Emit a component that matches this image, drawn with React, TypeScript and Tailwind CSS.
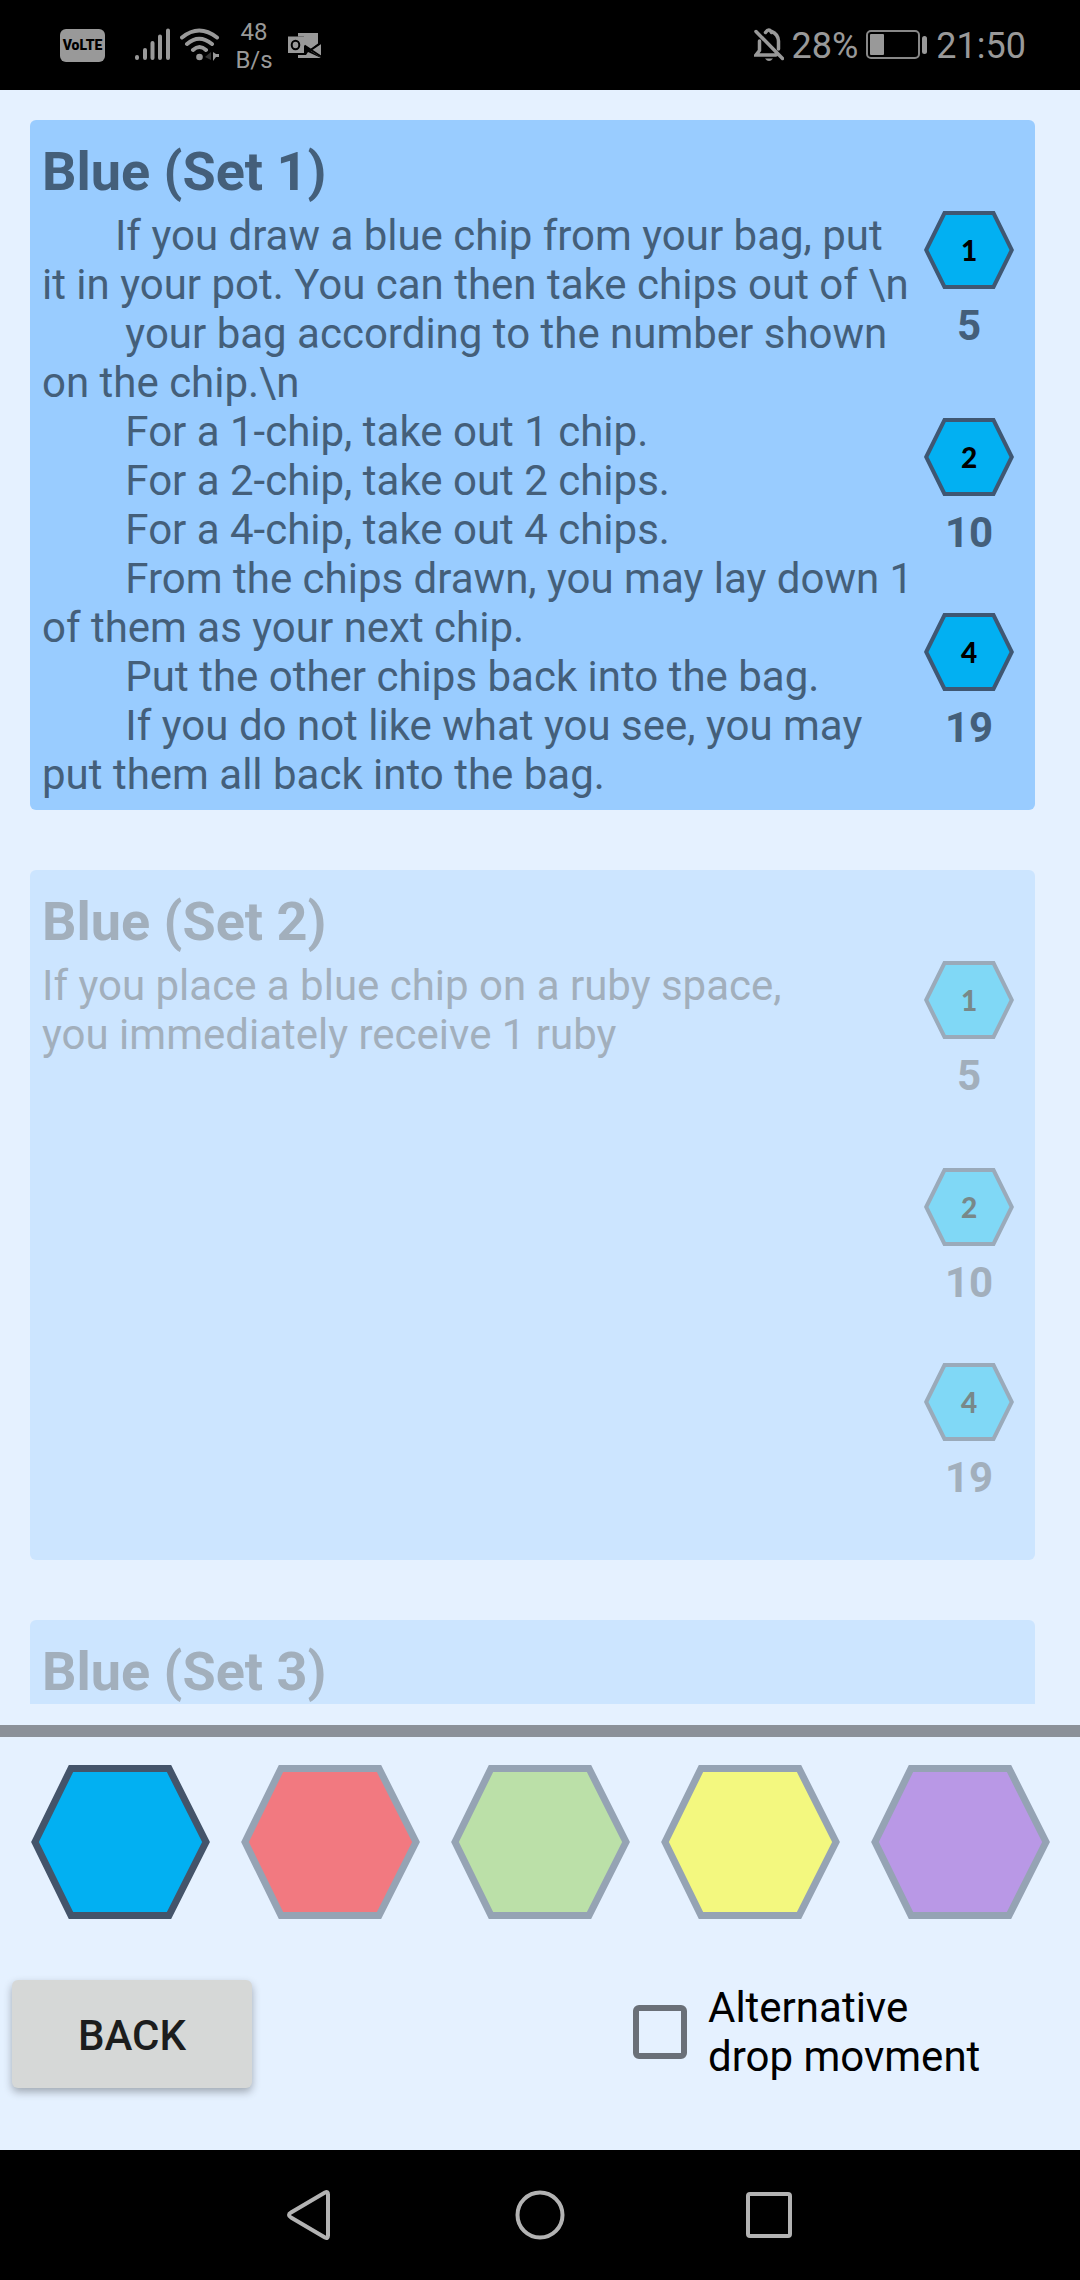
import { useState } from "react";

const CHIPS = [
  { value: 1, price: 5, spacing: "" },
  { value: 2, price: 10, spacing: "mt-[68px]" },
  { value: 4, price: 19, spacing: "mt-14" },
];

const SETS = [
  {
    title: "Blue (Set 1)",
    text:
      "       If you draw a blue chip from your bag, put\n" +
      "it in your pot. You can then take chips out of \\n\n" +
      "        your bag according to the number shown\n" +
      "on the chip.\\n\n" +
      "        For a 1-chip, take out 1 chip.\n" +
      "        For a 2-chip, take out 2 chips.\n" +
      "        For a 4-chip, take out 4 chips.\n" +
      "        From the chips drawn, you may lay down 1\n" +
      "of them as your next chip.\n" +
      "        Put the other chips back into the bag.\n" +
      "        If you do not like what you see, you may\n" +
      "put them all back into the bag.",
    chips: CHIPS,
  },
  {
    title: "Blue (Set 2)",
    text: "If you place a blue chip on a ruby space,\nyou immediately receive 1 ruby",
    chips: CHIPS,
  },
  { title: "Blue (Set 3)", text: "", chips: [] },
];

const COLOURS = [
  { name: "Blue", fill: "#02b0f2", edge: "#44546a" },
  { name: "Red", fill: "#f27980", edge: "#95a3b4" },
  { name: "Green", fill: "#bbe0a8", edge: "#95a3b4" },
  { name: "Yellow", fill: "#f3f87f", edge: "#95a3b4" },
  { name: "Purple", fill: "#b998e6", edge: "#95a3b4" },
];

function StatusBar() {
  return (
    <header className="flex h-[90px] shrink-0 items-center bg-black pr-[54px] pl-[60px] text-[#999]">
      <span className="flex h-[33px] w-[45px] items-center justify-center rounded-md bg-[#999] text-sm font-black text-black">
        VoLTE
      </span>
      <svg className="ml-[30px] h-[34px] w-[35px]" viewBox="0 0 35 34" stroke="currentColor" strokeWidth="4" strokeLinecap="round" aria-label="Signal">
        <path d="M2 29v1M10 22v8M17.500 15v15M25 8.500v21.500M33 2.500v27.500" />
      </svg>
      <svg className="ml-2.5 h-[34px] w-10" viewBox="0 0 40 34" fill="none" stroke="currentColor" strokeWidth="4" strokeLinecap="round" aria-label="Wi-Fi">
        <path d="M2 9.500Q19 -4.500 37 9.500M7 16Q19 5.500 32 16M13 22Q19.500 16 26 22" />
        <circle cx="19.500" cy="29" r="3.300" fill="currentColor" stroke="none" />
        <path d="M31 24v8l-6-3z" fill="#333" stroke="none" />
        <path d="M33 24v9l3-4h3v-3h-3z" fill="currentColor" stroke="none" />
      </svg>
      <span className="ml-3 w-[44px] pt-0.5 text-center text-2xl leading-7">
        48
        <br />
        B/s
      </span>
      <svg className="ml-3 h-[27px] w-[34px]" viewBox="0 0 34 27" aria-label="Outlook">
        <path fill="currentColor" d="M10 1h20v10.500l-8 6-6-4V4.500h-6z" />
        <path fill="currentColor" d="M33 11.500v14l-11-7zM10 23h8l2-3 12 5.500v.500H10z" />
        <rect y="4.500" width="16" height="16.500" fill="currentColor" />
        <ellipse cx="7.500" cy="13" rx="3.800" ry="4.200" fill="none" stroke="#000" strokeWidth="2" />
        <path d="M16.500 13.500L33 24.500M22 18.500L33 11" stroke="#000" strokeWidth="2" />
      </svg>
      <svg className="ml-auto h-[34px] w-[30px]" viewBox="0 0 30 34" fill="none" stroke="currentColor" strokeWidth="3.500" strokeLinecap="round" aria-label="Muted">
        <path d="M2 3.500l26.500 27M5.500 13v9.500L2 27h20M24.500 21v-8q-.500-7-7-9.500M11.500 4.500q3.500-5 6 0" />
        <path d="M11 30.500h8q-4 5-8 0z" fill="currentColor" stroke="none" />
      </svg>
      <span className="ml-2 pt-0.5 text-4xl">28%</span>
      <svg className="ml-2 h-[30px] w-[62px]" viewBox="0 0 62 30" fill="none" aria-label="Battery">
        <rect x="1" y="1" width="52" height="27" rx="4" stroke="#888" strokeWidth="2" />
        <rect x="4" y="4" width="14" height="21" rx="1" fill="currentColor" />
        <rect x="56" y="6" width="5" height="18" rx="2.500" fill="currentColor" />
      </svg>
      <span className="ml-2 pt-0.5 text-4xl">21:50</span>
    </header>
  );
}

function Chip({ value, active }: { value: number; active: boolean }) {
  return (
    <span className="grid place-items-center">
      <svg className="col-start-1 row-start-1 h-[78px] w-[90px]" viewBox="0 0 90 78" aria-hidden="true">
        <path
          d="M2.200 39L20.500 2H69.500L87.800 39L69.500 76H20.500Z"
          fill={active ? "#02b0f2" : "#80d8f6"}
          stroke={active ? "#3f5773" : "#9aaaba"}
          strokeWidth="4"
        />
      </svg>
      <span
        className={`col-start-1 row-start-1 font-['Lato',sans-serif] text-[28px] font-black ${active ? "text-black" : "text-[#788889]"}`}
      >
        {value}
      </span>
    </span>
  );
}

type RuleCardProps = {
  title: string;
  text: string;
  chips: typeof CHIPS;
  active: boolean;
  onSelect: () => void;
};

function RuleCard({ title, text, chips, active, onSelect }: RuleCardProps) {
  return (
    <section
      onClick={onSelect}
      className={`flex min-h-[690px] shrink-0 rounded-md px-3 ${active ? "bg-[#99ccff] text-[#445f7a]" : "bg-[#cce5ff] text-[#a2afbc]"}`}
    >
      <div className="min-w-0 flex-1 pt-5 pb-[11px]">
        <h2 className="text-[54px] leading-[63px] font-bold">{title}</h2>
        <p className="mt-2 text-[42px] leading-[49px] whitespace-pre-wrap">{text}</p>
      </div>
      <ul className="w-[108px] pt-[91px]">
        {chips.map((chip) => (
          <li key={chip.value} className={`flex flex-col items-center gap-3 ${chip.spacing}`}>
            <Chip value={chip.value} active={active} />
            <span className="text-[42px] leading-[49px] font-bold">{chip.price}</span>
          </li>
        ))}
      </ul>
    </section>
  );
}

export default function App() {
  const [selected, setSelected] = useState(0);
  const [alternative, setAlternative] = useState(false);

  return (
    <div className="flex h-screen flex-col bg-[#e5f1ff] font-['Roboto',sans-serif]">
      <StatusBar />

      <main className="mb-[21px] flex min-h-0 flex-1 flex-col gap-[60px] overflow-y-auto pt-[30px] pr-[45px] pl-[30px] [scrollbar-width:none]">
        {SETS.map((set, index) => (
          <RuleCard key={set.title} {...set} active={index === selected} onSelect={() => setSelected(index)} />
        ))}
      </main>

      <div className="h-3 shrink-0 bg-[#8b9199]" />

      <nav className="grid shrink-0 grid-cols-5 gap-[30px] px-[30px] pt-7" aria-label="Chip colour">
        {COLOURS.map((colour) => (
          <button key={colour.name} type="button" aria-label={colour.name}>
            <svg className="block w-full" viewBox="0 0 180 154" aria-hidden="true">
              <path
                d="M5 77L41 3.500H139L176 77L139 150.500H41Z"
                fill={colour.fill}
                stroke={colour.edge}
                strokeWidth="7"
              />
            </svg>
          </button>
        ))}
      </nav>

      <div className="flex shrink-0 items-center pt-[61px] pb-[62px] pl-3">
        <button
          type="button"
          className="h-[108px] w-60 rounded-md bg-[#d6d8d7] pt-0.5 text-[42px] font-medium text-[#1c1d1d] shadow-[0_4px_8px_rgba(0,0,0,0.3)]"
        >
          BACK
        </button>
        <label className="ml-auto flex w-[447px] items-center gap-[21px] pb-1 text-[42px] leading-[49px] text-black">
          <input
            type="checkbox"
            checked={alternative}
            onChange={(event) => setAlternative(event.target.checked)}
            className="size-[54px] appearance-none rounded-md border-6 border-[#6a7078] checked:bg-[#6a7078]"
          />
          <span>
            Alternative
            <br />
            drop movment
          </span>
        </label>
      </div>

      <footer className="flex h-[130px] shrink-0 items-center justify-center gap-[180px] bg-black text-[#b3b3b3]">
        <button type="button" aria-label="Back">
          <svg className="block size-[50px]" viewBox="0 0 50 50" fill="none" stroke="currentColor" strokeWidth="4" strokeLinejoin="round">
            <path d="M4 25Q4 23.500 6 22.500L40 2.500Q43 1 43 4.500V45.500Q43 49 40 47.500L6 27.500Q4 26.500 4 25Z" />
          </svg>
        </button>
        <button type="button" aria-label="Home">
          <svg className="block size-[50px]" viewBox="0 0 50 50" fill="none" stroke="currentColor" strokeWidth="4">
            <circle cx="25" cy="25" r="22.500" />
          </svg>
        </button>
        <button type="button" aria-label="Recent apps">
          <svg className="block size-[50px]" viewBox="0 0 50 50" fill="none" stroke="currentColor" strokeWidth="4">
            <rect x="3" y="4" width="42" height="42" rx="2" />
          </svg>
        </button>
      </footer>
    </div>
  );
}
